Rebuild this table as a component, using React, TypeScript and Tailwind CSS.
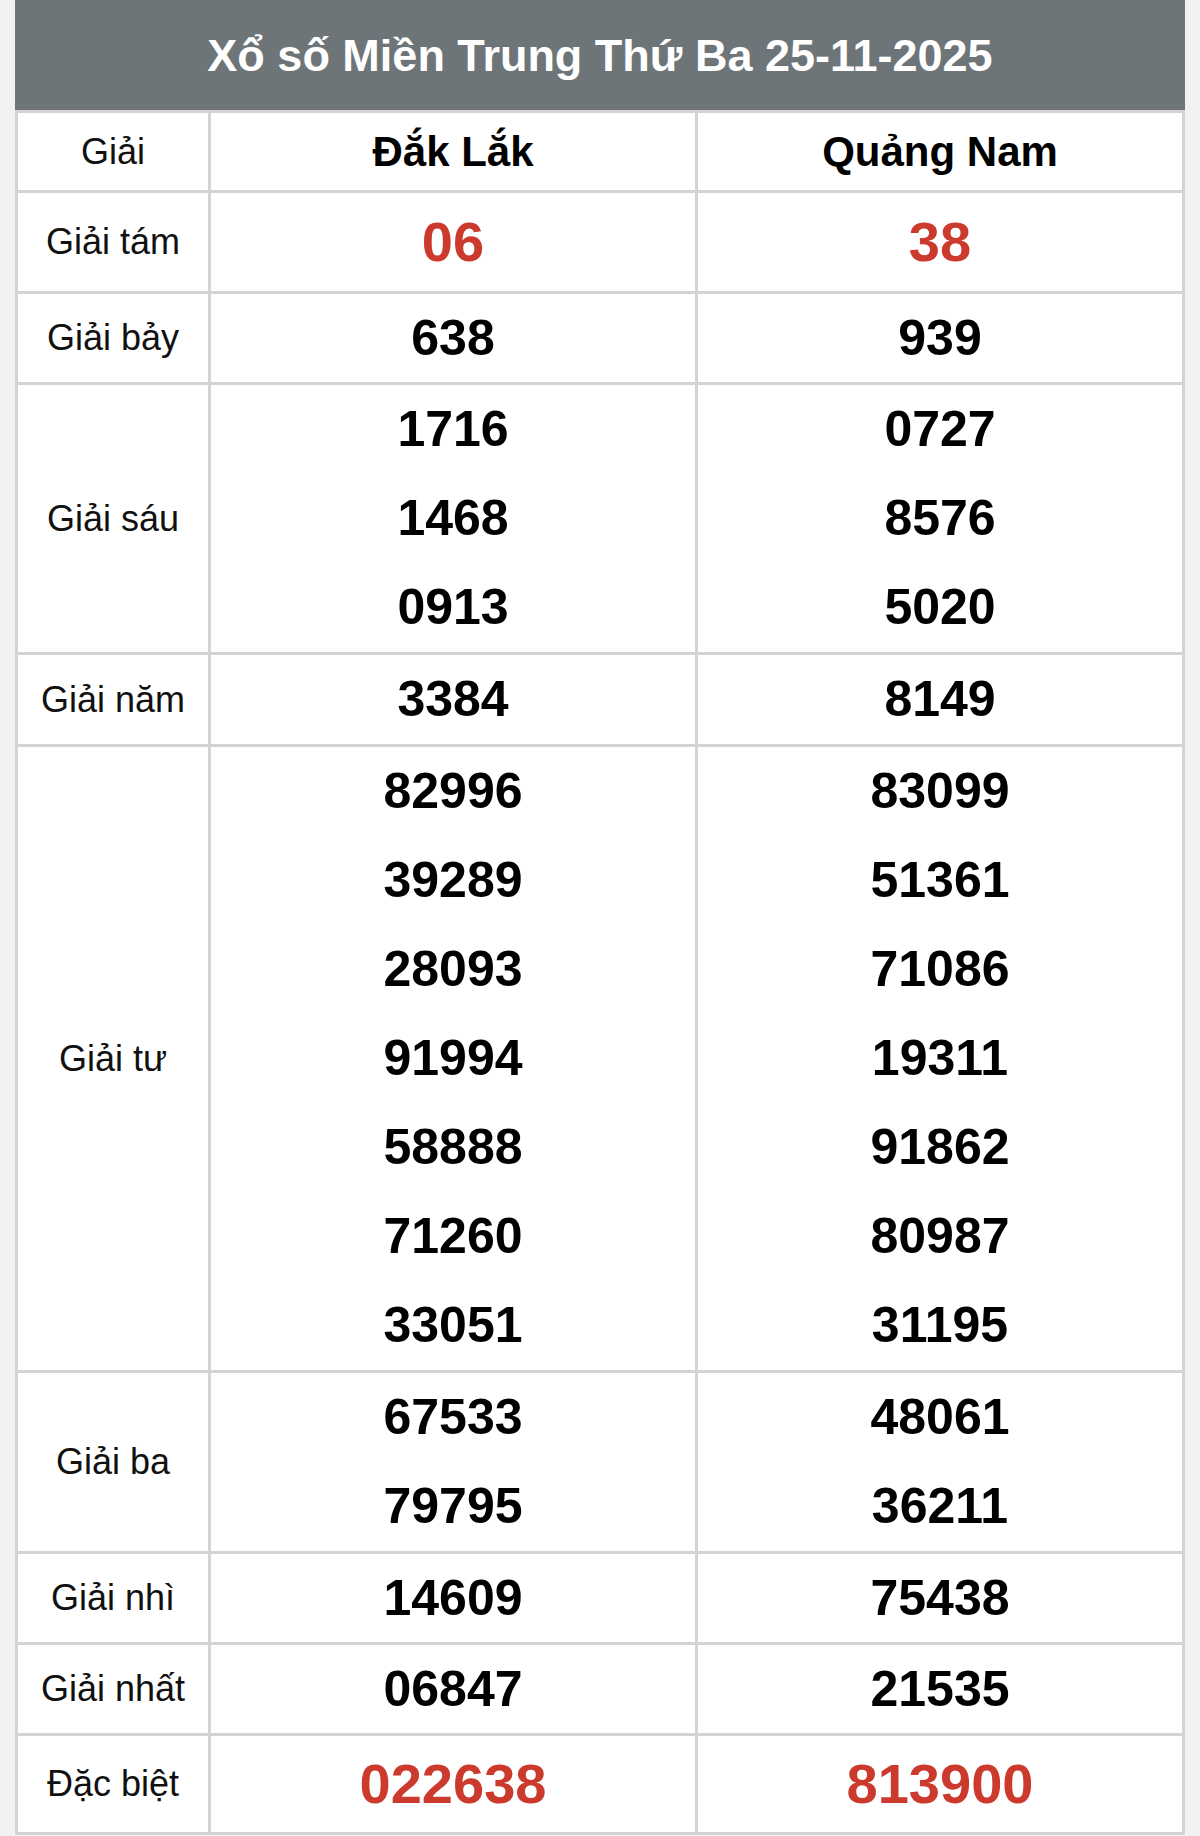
type Prize = {
  label: string;
  a: string[];
  b: string[];
  red?: boolean;
  lineClass: string;
};

const PRIZES: Prize[] = [
  {label: 'Giải tám', a: ['06'], b: ['38'], red: true, lineClass: 'h-[98px]'},
  {label: 'Giải bảy', a: ['638'], b: ['939'], lineClass: 'h-[88px]'},
  {
    label: 'Giải sáu',
    a: ['1716', '1468', '0913'],
    b: ['0727', '8576', '5020'],
    lineClass: 'h-[89px]',
  },
  {label: 'Giải năm', a: ['3384'], b: ['8149'], lineClass: 'h-[89px]'},
  {
    label: 'Giải tư',
    a: ['82996', '39289', '28093', '91994', '58888', '71260', '33051'],
    b: ['83099', '51361', '71086', '19311', '91862', '80987', '31195'],
    lineClass: 'h-[89px]',
  },
  {label: 'Giải ba', a: ['67533', '79795'], b: ['48061', '36211'], lineClass: 'h-[89px]'},
  {label: 'Giải nhì', a: ['14609'], b: ['75438'], lineClass: 'h-[88px]'},
  {label: 'Giải nhất', a: ['06847'], b: ['21535'], lineClass: 'h-[88px]'},
  {label: 'Đặc biệt', a: ['022638'], b: ['813900'], red: true, lineClass: 'h-[96px]'},
];

function NumberCell({nums, red, lineClass, last}: {nums: string[]; red?: boolean; lineClass: string; last?: boolean}) {
  return (
    <div
      className={
        'flex flex-col border-b-[3px] border-[#d3d3d3] ' + (last ? '' : 'border-r-[3px]')
      }
    >
      {nums.map((n, i) => (
        <div
          key={i}
          className={
            'flex items-center justify-center font-bold ' +
            lineClass +
            (red ? ' text-[56px] text-[#cb3a2d]' : ' text-[50px] text-black')
          }
        >
          {n}
        </div>
      ))}
    </div>
  );
}

export default function App() {
  return (
    <div
      className="min-h-[1836px] bg-[#f1f1f1] px-[15px]"
      style={{fontFamily: '"Liberation Sans", Arial, sans-serif'}}
    >
      <div className="flex h-[110px] items-center justify-center bg-[#6e7578] pt-[2px] text-[45px] font-bold text-white">
        Xổ số Miền Trung Thứ Ba 25-11-2025
      </div>
      <div className="grid grid-cols-[193px_487px_484px] border-x-[3px] border-t-[3px] border-[#d3d3d3] bg-white">
        <div className="flex h-[80px] items-center justify-center border-b-[3px] border-r-[3px] border-[#d3d3d3] text-[36px] text-[#111]">
          Giải
        </div>
        <div className="flex h-[80px] items-center justify-center border-b-[3px] border-r-[3px] border-[#d3d3d3] text-[42px] font-bold text-black">
          Đắk Lắk
        </div>
        <div className="flex h-[80px] items-center justify-center border-b-[3px] border-[#d3d3d3] text-[42px] font-bold text-black">
          Quảng Nam
        </div>
        {PRIZES.map(p => (
          <div key={p.label} className="contents">
            <div className="flex items-center justify-center border-b-[3px] border-r-[3px] border-[#d3d3d3] text-[36px] text-[#111]">
              {p.label}
            </div>
            <NumberCell nums={p.a} red={p.red} lineClass={p.lineClass} />
            <NumberCell nums={p.b} red={p.red} lineClass={p.lineClass} last />
          </div>
        ))}
      </div>
    </div>
  );
}
